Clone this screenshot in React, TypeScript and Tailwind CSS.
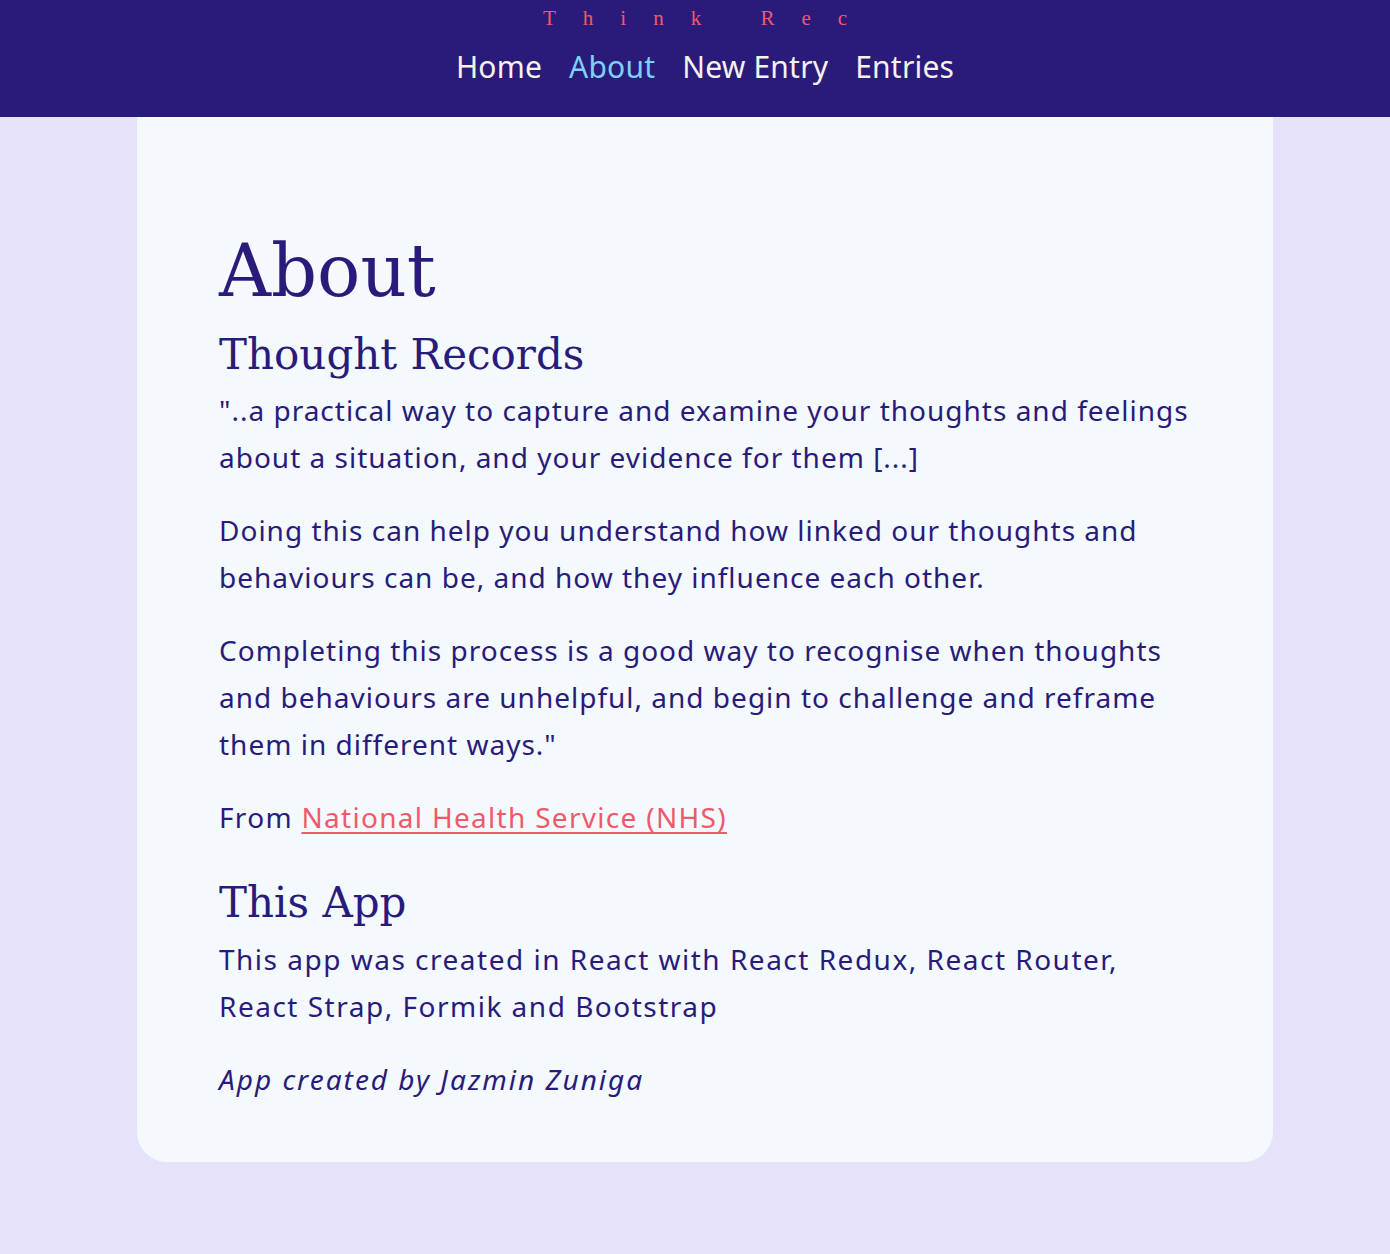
const navy = "text-[#2a1b7a]";
const serif = "font-['DejaVu_Serif',serif]";

function NavBar() {
    const links = ["Home", "About", "New Entry", "Entries"];
    return (
        <header className="bg-[#2a1b7a] h-[117px] flex flex-col items-center">
            <div className="mt-[4px] text-[21px] leading-[28px] tracking-[27px] pl-[27px] text-[#ee5a6a] font-['Liberation_Serif',serif]">
                Think Rec
            </div>
            <nav className="mt-[15px] pl-[20px] flex gap-[27px] font-['Noto_Sans',sans-serif] text-[30px] leading-[40px] tracking-[0.2px]">
                {links.map((l) => (
                    <a
                        key={l}
                        href="#"
                        className={l === "About" ? "text-[#7fd0f8]" : "text-[#f6f1ea]"}
                    >
                        {l}
                    </a>
                ))}
            </nav>
        </header>
    );
}

export default function App() {
    return (
        <div className="min-h-[1254px] bg-[#e5e2fa] font-['Noto_Sans',sans-serif]">
            <NavBar />
            <main className="ml-[137px] w-[1136px] bg-[#f3f9fd] rounded-b-[30px] pl-[82px] pr-[80px] pt-[112px] pb-[59px]">
                <h1 className={`${navy} ${serif} text-[72px] leading-[84px] mb-[13px]`}>
                    About
                </h1>
                <h2 className={`${navy} ${serif} text-[42px] leading-[58px] mb-[3px]`}>
                    Thought Records
                </h2>
                <div className={`${navy} text-[28px] leading-[47px] tracking-[1px]`}>
                    <p className="mb-[26px]">
                        "..a practical way to capture and examine your thoughts and feelings about a situation, and your evidence for them [...]
                    </p>
                    <p className="mb-[26px]">
                        Doing this can help you understand how linked our thoughts and behaviours can be, and how they influence each other.
                    </p>
                    <p className="mb-[26px]">
                        Completing this process is a good way to recognise when thoughts and behaviours are unhelpful, and begin to challenge and reframe them in different ways."
                    </p>
                    <p className="mb-[33px] tracking-[1.3px]">
                        From{" "}
                        <a href="#" className="text-[#ee5a6a] underline underline-offset-4 decoration-2">
                            National Health Service (NHS)
                        </a>
                    </p>
                </div>
                <h2 className={`${navy} ${serif} text-[42px] leading-[58px] mb-[4px]`}>
                    This App
                </h2>
                <div className={`${navy} text-[28px] leading-[47px]`}>
                    <p className="mb-[26px] tracking-[1.5px]">
                        This app was created in React with React Redux, React Router, React Strap, Formik and Bootstrap
                    </p>
                    <p className="italic tracking-[2px]">App created by Jazmin Zuniga</p>
                </div>
            </main>
        </div>
    );
}
